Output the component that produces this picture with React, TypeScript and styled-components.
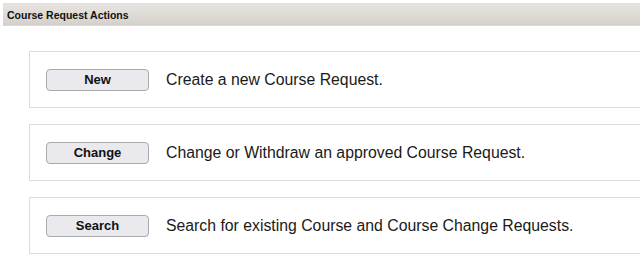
import React from 'react';
import styled, { createGlobalStyle } from 'styled-components';

const GlobalStyle = createGlobalStyle`
  html, body {
    margin: 0;
    padding: 0;
    background: #ffffff;
    overflow: hidden;
    font-family: "Liberation Sans", Arial, sans-serif;
  }
`;

const actions = [
  { label: 'New', text: 'Create a new Course Request.' },
  { label: 'Change', text: 'Change or Withdraw an approved Course Request.' },
  { label: 'Search', text: 'Search for existing Course and Course Change Requests.' },
];

const App: React.FC = () => {
  return (
    <Page>
      <GlobalStyle />
      <HeaderBar>Course Request Actions</HeaderBar>
      <ActionList>
        {actions.map((a) => (
          <ActionCard key={a.label}>
            <ActionButton type="button">{a.label}</ActionButton>
            <ActionText>{a.text}</ActionText>
          </ActionCard>
        ))}
      </ActionList>
    </Page>
  );
};

const Page = styled.div`
  padding-top: 3px;
  padding-left: 3px;
`;

const HeaderBar = styled.div`
  height: 20px;
  line-height: 20px;
  padding-left: 4px;
  border-top: 2px solid #e4e1de;
  border-bottom: 1px solid #dcd8d3;
  background: linear-gradient(#e7e4e0, #d4d0ca);
  font-size: 10.5px;
  font-weight: bold;
  color: #111;
`;

const ActionList = styled.div`
  display: flex;
  flex-direction: column;
  gap: 16px;
  padding: 25px 0 0 26px;
`;

const ActionCard = styled.div`
  display: flex;
  align-items: center;
  gap: 17px;
  height: 57px;
  box-sizing: border-box;
  padding-left: 16px;
  border: 1px solid #dcdcdc;
  border-right: none;
`;

const ActionButton = styled.button`
  width: 103px;
  height: 22px;
  padding: 0;
  border: 1px solid #a9a9b0;
  border-radius: 4px;
  background: #e9e9ee;
  font-family: "Liberation Sans", Arial, sans-serif;
  font-size: 13px;
  font-weight: bold;
  color: #111;
`;

const ActionText = styled.span`
  font-size: 15.8px;
  color: #1a1a1a;
`;

export default App;
